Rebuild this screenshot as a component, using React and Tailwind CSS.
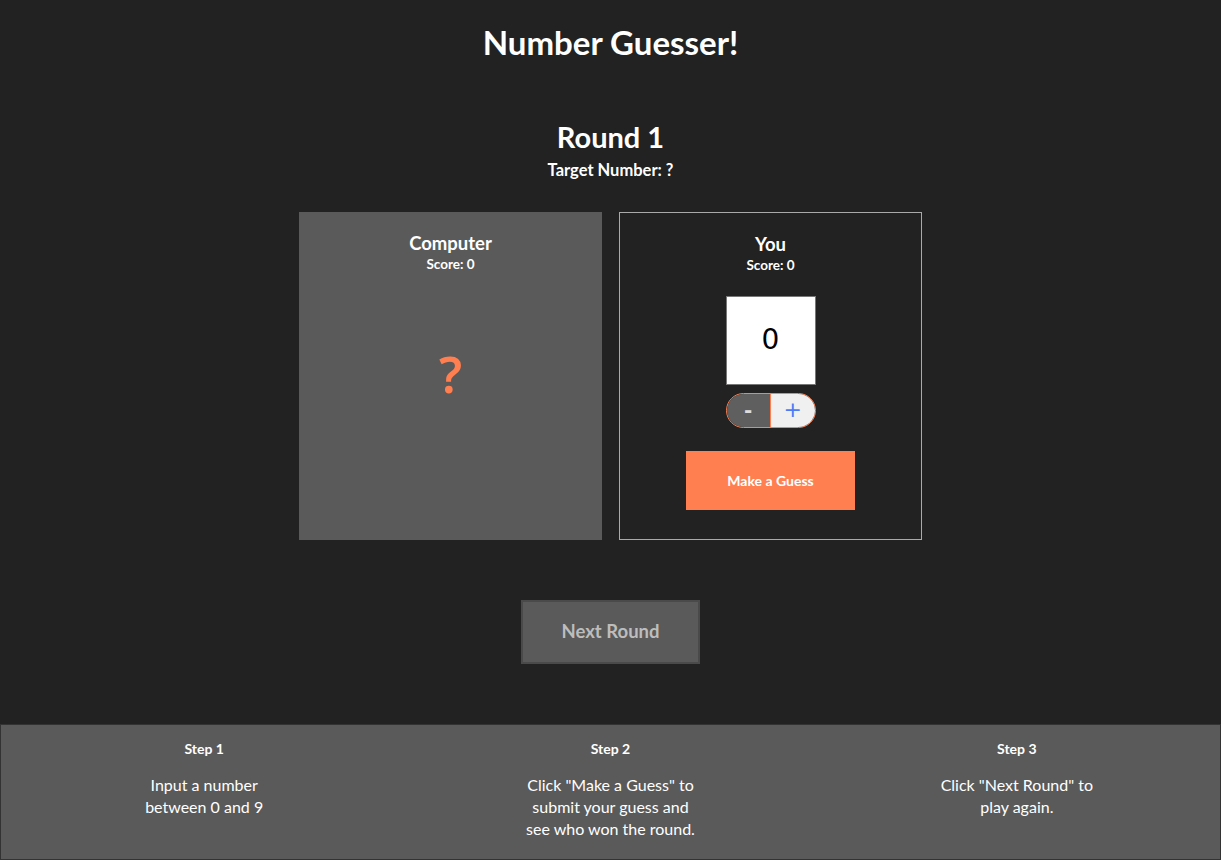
import { useState } from "react";

const steps = [
  { title: "Step 1", lines: ["Input a number", "between 0 and 9"] },
  { title: "Step 2", lines: ['Click "Make a Guess" to', "submit your guess and", "see who won the round."] },
  { title: "Step 3", lines: ['Click "Next Round" to', "play again."] },
];

export default function App() {
  const [guess, setGuess] = useState(0);

  return (
    <div className="min-h-[860px] bg-[#222222] text-white flex flex-col" style={{ fontFamily: "Lato, 'Noto Sans', sans-serif" }}>
      <h1 className="text-center text-[33px] font-bold leading-none pt-[26px]">Number Guesser!</h1>

      <div className="text-center mt-[63px]">
        <h2 className="text-[29px] font-bold leading-none">Round 1</h2>
        <p className="text-[16.5px] font-bold mt-[11px] leading-none">Target Number: ?</p>
      </div>

      <div className="flex justify-center gap-[17px] mt-[33px]">
        {/* Computer */}
        <div className="w-[303px] h-[328px] bg-[#5a5a5a] flex flex-col items-center pt-[22px]">
          <h3 className="text-[18.5px] font-bold leading-none">Computer</h3>
          <p className="text-[13.5px] font-bold mt-[6px] leading-none">Score: 0</p>
          <div className="text-[50px] font-semibold text-[#ff7f50] mt-[77px] leading-none" style={{ fontFamily: "'Noto Sans', sans-serif" }}>?</div>
        </div>

        {/* You */}
        <div className="w-[303px] h-[328px] border border-[#aaaaaa] flex flex-col items-center pt-[22px]">
          <h3 className="text-[18.5px] font-bold leading-none">You</h3>
          <p className="text-[13.5px] font-bold mt-[6px] leading-none">Score: 0</p>
          <div className="mt-[23px] w-[90px] h-[89px] bg-white border border-[#777] flex items-center justify-center text-black text-[28px]" style={{ fontFamily: "'DejaVu Sans', sans-serif" }}>
            {guess}
          </div>
          <div className="mt-[8px] w-[90px] h-[35px] rounded-full border border-[#ff7f50] overflow-hidden flex" style={{ fontFamily: "'DejaVu Sans', sans-serif" }}>
            <button onClick={() => setGuess(g => Math.max(0, g - 1))} className="flex-1 bg-[#5f5f5f] text-[#ddd] text-[20px] font-bold border-r border-[#ff7f50] leading-none">-</button>
            <button onClick={() => setGuess(g => Math.min(9, g + 1))} className="flex-1 bg-[#f0f0f0] text-[#4a7cf7] text-[22px] leading-none">+</button>
          </div>
          <button className="mt-[23px] w-[169px] h-[59px] bg-[#ff7f50] text-white text-[14px] font-bold">Make a Guess</button>
        </div>
      </div>

      <div className="flex justify-center mt-[60px]">
        <button className="w-[179px] h-[64px] bg-[#5a5a5a] border-2 border-[#4a4a4a] text-[#bdbdbd] text-[18.5px] font-bold">Next Round</button>
      </div>

      <footer className="mt-auto h-[136px] bg-[#5a5a5a] border border-[#333] grid grid-cols-3">
        {steps.map(s => (
          <div key={s.title} className="text-center pt-[17px]">
            <h4 className="text-[14px] font-bold leading-none">{s.title}</h4>
            <p className="text-[16px] leading-[22px] mt-[18px]">
              {s.lines.map((l, i) => (
                <span key={i} className="block">{l}</span>
              ))}
            </p>
          </div>
        ))}
      </footer>
    </div>
  );
}
